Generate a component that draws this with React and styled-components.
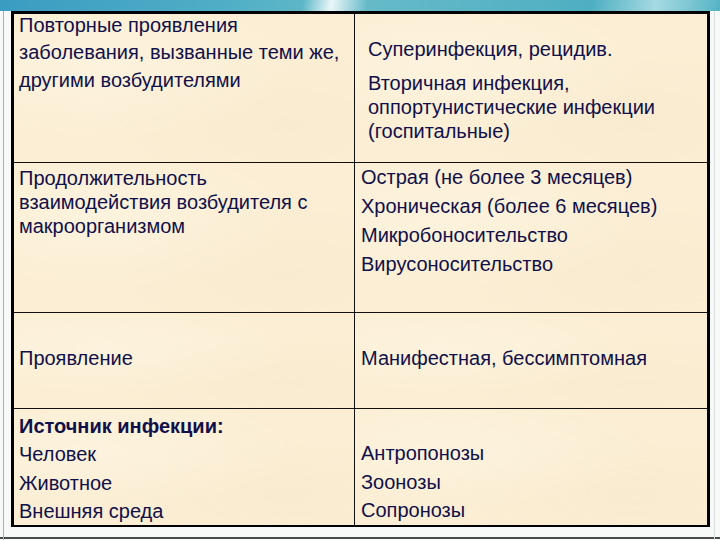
import React from 'react'
import styled, { createGlobalStyle } from 'styled-components'

const GlobalStyle = createGlobalStyle`
  html, body {
    margin: 0;
    padding: 0;
    background: #ffffff;
  }
`

const Slide = styled.div`
  width: 720px;
  height: 540px;
  box-sizing: border-box;
  padding: 11px 10px 13px 11px;
  font-family: 'Liberation Sans', Arial, sans-serif;
  background:
    linear-gradient(100deg, #3b9cc2 0%, #4eaec6 30%, #5db6c7 42%, #eaf7f8 46%, #66bac8 51%, #4eafc2 82%, #a6dae2 91%, #55b3c4 100%) top left / 100% 11px no-repeat,
    linear-gradient(#9fb4aa, #9fb4aa) 3px 0 / 1px 100% no-repeat,
    linear-gradient(#d8e0df, #d8e0df) 714px 0 / 1px 100% no-repeat,
    linear-gradient(#4a4a4a, #4a4a4a) 0 537px / 100% 2px no-repeat,
    #f7f9f8;
`

const Table = styled.div`
  width: 699px;
  height: 516px;
  box-sizing: border-box;
  border: 3px solid #000;
  background: #111;
  display: grid;
  grid-template-columns: 340px 1fr;
  grid-template-rows: 148px 149px 95px 1fr;
  gap: 1px;
`

const Cell = styled.div`
  display: flex;
  flex-direction: column;
  justify-content: ${(p) => p.$align || 'flex-start'};
  padding: ${(p) => p.$pad || '0 5px'};
  color: #10104a;
  font-size: 20px;
  line-height: ${(p) => p.$lh || 24}px;
  background:
    radial-gradient(ellipse at 25% 35%, rgba(255, 248, 232, 0.45) 0, rgba(255, 248, 232, 0) 55%),
    radial-gradient(ellipse at 80% 75%, rgba(245, 230, 200, 0.35) 0, rgba(245, 230, 200, 0) 50%),
    #fbeed4;
`

const Line = styled.div`
  white-space: nowrap;
  font-weight: ${(p) => (p.$bold ? 700 : 400)};
`

const Para = styled.div`
  margin-top: ${(p) => p.$gap || 0}px;
`

const rows = [
  {
    left: {
      pad: '0 5px',
      lh: 22,
      paras: [
        { lines: ['Повторные проявления'] },
        { gap: 5, lines: ['заболевания, вызванные теми же,'] },
        { gap: 6, lines: ['другими возбудителями'] },
      ],
    },
    right: {
      align: 'center',
      pad: '3px 5px 0 13px',
      paras: [
        { lines: ['Суперинфекция, рецидив.'] },
        { gap: 10, lines: ['Вторичная инфекция,', 'оппортунистические инфекции', '(госпитальные)'] },
      ],
    },
  },
  {
    left: {
      pad: '3px 5px 0',
      paras: [{ lines: ['Продолжительность', 'взаимодействия возбудителя с', 'макроорганизмом'] }],
    },
    right: {
      lh: 29,
      pad: '0 6px',
      paras: [
        { lines: ['Острая (не более 3 месяцев)'] },
        { lines: ['Хроническая (более 6 месяцев)'] },
        { lines: ['Микробоносительство'] },
        { lines: ['Вирусоносительство'] },
      ],
    },
  },
  {
    left: { align: 'center', pad: '0 5px 6px', paras: [{ lines: ['Проявление'] }] },
    right: { align: 'center', pad: '0 6px 6px', paras: [{ lines: ['Манифестная, бессимптомная'] }] },
  },
  {
    left: {
      lh: 28.3,
      pad: '3px 5px 0',
      paras: [{ bold: 0, lines: ['Источник инфекции:', 'Человек', 'Животное', 'Внешняя среда'] }],
    },
    right: {
      lh: 28.3,
      align: 'flex-end',
      pad: '0 6px 1px',
      paras: [{ lines: ['Антропонозы', 'Зоонозы', 'Сопронозы'] }],
    },
  },
]

const CellContent = ({ cell }) => (
  <Cell $align={cell.align} $pad={cell.pad} $lh={cell.lh}>
    {cell.paras.map((p, j) => (
      <Para key={j} $gap={p.gap}>
        {p.lines.map((t, k) => (
          <Line key={k} $bold={p.bold === k}>
            {t}
          </Line>
        ))}
      </Para>
    ))}
  </Cell>
)

const App = () => {
  return (
    <>
      <GlobalStyle />
      <Slide>
        <Table>
          {rows.map((row, i) => (
            <React.Fragment key={i}>
              <CellContent cell={row.left} />
              <CellContent cell={row.right} />
            </React.Fragment>
          ))}
        </Table>
      </Slide>
    </>
  )
}

export default App
